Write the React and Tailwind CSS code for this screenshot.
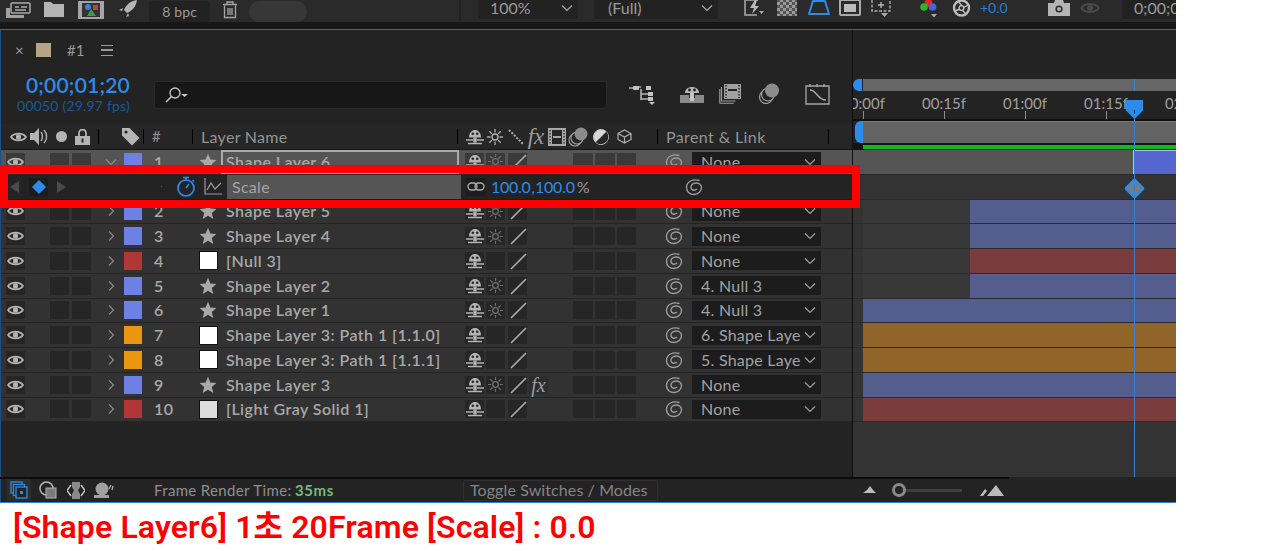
import React from "react";

const ui = { fontFamily: 'Lato, "Noto Sans", sans-serif' };

const Eye = ({ c = "#b4b4b4", s = 17 }) => (
  <svg width={s} height={s * 0.7} viewBox="0 0 17 12"><path d="M1 6 C4 1.5 13 1.5 16 6 C13 10.5 4 10.5 1 6Z" fill="none" stroke={c} strokeWidth="1.8" /><circle cx="8.5" cy="6" r="2.6" fill={c} /></svg>
);
const Star = () => (
  <svg width="18" height="18" viewBox="0 0 18 18"><path d="M9 .8 11.4 6.6 17.4 7 12.8 11 14.3 17 9 13.7 3.7 17 5.2 11 .6 7 6.6 6.6Z" fill="#a8a8a8" /></svg>
);
const Shy = ({ c = "#b4b4b4" }) => (
  <svg width="18" height="16" viewBox="0 0 18 16"><path d="M3 8.5 C3 -1.500 15 -1.500 15 8.500Z" fill={c} /><circle cx="6.800" cy="4.800" r="1.300" fill="#2a2a2a" /><circle cx="11.200" cy="4.800" r="1.300" fill="#2a2a2a" /><rect x="7.300" y="8.500" width="3.400" height="5" fill={c} /><path d="M0 11H7M11 11H18M2 14.500H16" stroke={c} strokeWidth="1.300" /></svg>
);
const Sun = ({ c = "#6e6e6e", s = 15 }) => (
  <svg width={s} height={s} viewBox="0 0 16 16"><circle cx="8" cy="8" r="3" fill="none" stroke={c} strokeWidth="1.4" /><path d="M8 0V3.5M8 12.5V16M0 8H3.5M12.5 8H16M2.3 2.3 4.8 4.8M11.2 11.2 13.7 13.7M13.7 2.3 11.2 4.8M4.8 11.2 2.3 13.7" stroke={c} strokeWidth="1.3" /></svg>
);
const Slash = () => (
  <svg width="18" height="18" viewBox="0 0 18 18"><path d="M2 17 17 2" stroke="#aaa" strokeWidth="1.7" /></svg>
);
const Fx = ({ size = "text-[20px]" }) => (
  <span className={`${size} italic font-normal tracking-normal leading-none text-[#9c9c9c]`} style={{ fontFamily: '"Liberation Serif", serif' }}>fx</span>
);
const Spiral = () => (
  <svg width="18" height="18" viewBox="0 0 18 18"><path d="M14.500 2.500 C8 .5 1.500 3.500 1.500 9.500 C1.500 14 5 16.500 9 16.500 C13.500 16.500 16.500 13 16.500 9.500 C16.500 6.500 13.500 5 11 5 C7.500 5 5.500 7.500 6 10 C6.500 12.500 10 13 12 11" fill="none" stroke="#9c9c9c" strokeWidth="1.4" /></svg>
);
const Chev = ({ open, c = "#8a8a8a", w = 14 }) => (
  <svg width={w} height="10" viewBox="0 0 14 10">{open ? <path d="M2 2.5 7 7.5 12 2.5" fill="none" stroke={c} strokeWidth="1.2" /> : <path d="M5 .5 9.5 5 5 9.5" fill="none" stroke={c} strokeWidth="1.2" />}</svg>
);

const rows = [
  { n: 2, c: "#6c80e6", t: "s", name: "Shape Layer 5", sun: 1, p: "None", bar: "#535d8e", at: 107 },
  { n: 3, c: "#6c80e6", t: "s", name: "Shape Layer 4", sun: 1, p: "None", bar: "#535d8e", at: 107 },
  { n: 4, c: "#b33636", t: "w", name: "[Null 3]", p: "None", bar: "#7a3c3c", at: 107 },
  { n: 5, c: "#6c80e6", t: "s", name: "Shape Layer 2", sun: 1, p: "4. Null 3", bar: "#535d8e", at: 107 },
  { n: 6, c: "#6c80e6", t: "s", name: "Shape Layer 1", sun: 1, p: "4. Null 3", bar: "#535d8e", at: 0 },
  { n: 7, c: "#ea960e", t: "w", name: "Shape Layer 3: Path 1 [1.1.0]", p: "6. Shape Laye", bar: "#916529", at: 0 },
  { n: 8, c: "#ea960e", t: "w", name: "Shape Layer 3: Path 1 [1.1.1]", p: "5. Shape Laye", bar: "#916529", at: 0 },
  { n: 9, c: "#6c80e6", t: "s", name: "Shape Layer 3", sun: 1, fx: 1, p: "None", bar: "#535d8e", at: 0 },
  { n: 10, c: "#b33636", t: "g", name: "[Light Gray Solid 1]", p: "None", bar: "#7a3c3c", at: 0 },
];

const Box = ({ w = "w-[19px]", cls = "", dark = "bg-[#242424]", children }) => (
  <div className={`${w} h-[18px] shrink-0 flex items-center justify-center ${dark} ${cls}`}>{children}</div>
);

function Row({ r, sel }) {
  const dark = sel ? "bg-[#3a3a3a]" : "bg-[#262626]";
  return (
    <div className={`flex items-center h-[24.75px] shrink-0 pl-[5px] border-b border-[#242424] text-[16px] tracking-[0.45px] font-semibold text-[#a8a8a8] ${sel ? "bg-[#555555]" : "bg-[#323232]"}`}>
      <Box dark={dark}><Eye /></Box>
      <Box cls="ml-[25px]" dark={dark} />
      <Box cls="ml-[3px]" dark={dark} />
      <div className="w-[33px] shrink-0 flex justify-center pl-[6px]"><Chev open={sel} /></div>
      <div className="w-[18px] h-[18px] shrink-0" style={{ background: r.c }} />
      <div className="w-[57px] shrink-0 pl-[12px]">{r.n}</div>
      <div className="w-[18px] h-[18px] shrink-0 flex items-center justify-center">
        {r.t === "s" ? <Star /> : <div className={`w-[19px] h-[19px] shrink-0 border border-[#111] ${r.t === "w" ? "bg-white" : "bg-[#dddddd]"}`} />}
      </div>
      <div className={`ml-[4px] h-[24px] shrink-0 flex items-center whitespace-nowrap ${sel ? "border-2 border-[#aaaaaa] pl-[3px] w-[238px] mr-[6px]" : "pl-[5px] w-[244px]"}`}>{r.name}</div>
      <Box w="w-[19px]" dark={dark}><Shy /></Box>
      <Box cls="ml-[2px]" dark={dark}>{r.sun ? <Sun /> : null}</Box>
      <Box cls="ml-[3px]" dark={dark}><Slash /></Box>
      <Box cls="ml-[2px]" dark={r.fx ? "bg-[#2c2c2c]" : ""}>{r.fx ? <Fx /> : null}</Box>
      <Box cls="ml-[25px]" w="w-[20px]" dark={dark} />
      <Box cls="ml-[2px]" w="w-[20px]" dark={dark} />
      <Box cls="ml-[2px]" dark={dark} />
      <div className="w-[56px] shrink-0 flex justify-center pl-[20px]"><Spiral /></div>
      <div className="w-[129px] h-[19px] shrink-0 bg-[#1c1c1c] flex items-center pl-[9px] pr-[4px] justify-between whitespace-nowrap text-[#a2a2a2] font-normal text-[16px] tracking-[0.25px]">
        <span>{r.p}</span><Chev open c="#a0a0a0" />
      </div>
    </div>
  );
}

function TlRow({ r }) {
  return (
    <div className="flex h-[24.75px] shrink-0 border-b border-[#2a2a2a] bg-[#383838]">
      <div className="w-[10px] shrink-0 bg-[#343434]" />
      {r.at ? <div className="shrink-0" style={{ width: r.at }} /> : null}
      <div className="flex-1" style={{ background: r.bar }} />
    </div>
  );
}

const Head = ({ w, cls = "", children }) => (
  <div className={`${w} shrink-0 flex items-center justify-center ${cls}`}>{children}</div>
);
const Sep = () => <div className="w-px h-[15px] bg-black shrink-0" />;

export default function App() {
  return (
    <div className="w-[1278px] h-[551px] bg-white overflow-hidden relative" style={ui}>
      <div className="w-[1176px] h-[503px] flex flex-col bg-[#232323]">
        {/* app toolbar */}
        <div className="h-[22px] shrink-0 bg-[#2a2a2a] flex items-center overflow-hidden text-[#9a9a9a] text-[16px]">
          <div className="ml-[5px] w-[26px] flex -mt-[2px]"><svg width="26" height="18" viewBox="0 0 26 18"><rect x="6" y="2" width="19" height="10" rx="1" fill="none" stroke="#aaa" strokeWidth="1.5" /><path d="M10 6h4M16 6h6M10 9h11" stroke="#aaa" strokeWidth="1.5" /><path d="M1 7h4v10H1zM5 14h14v3H5z" fill="#a0a0a0" /></svg></div>
          <div className="ml-[13px] w-[20px] flex -mt-[4px]"><svg width="20" height="16" viewBox="0 0 20 16"><path d="M0 1h7l2 2h11v13H0z" fill="#b4b4b4" /></svg></div>
          <div className="ml-[14px] w-[26px] flex -mt-[2px]"><svg width="26" height="18" viewBox="0 0 26 18"><rect width="26" height="18" fill="#a5a5a5" /><rect x="4" y="2" width="18" height="14" fill="#333" /><circle cx="10" cy="6" r="3" fill="#3f7fd6" /><path d="M13 8 18 15H9Z" fill="#3b9d4c" /><rect x="15" y="4" width="5" height="5" fill="#c93c3c" /></svg></div>
          <div className="ml-[14px] w-[20px] flex -mt-[4px]"><svg width="20" height="19" viewBox="0 0 20 19"><path d="M19 0C12 1 8 5 6 10l3 3c5-2 9-6 10-13ZM1 10l4-2-1 3ZM8 17l2-4 1 3Z" fill="#b4b4b4" /></svg></div>
          <div className="ml-[11px] w-[66px] h-[21px] rounded-[3px] bg-[#222222] flex items-center justify-center text-[14px] tracking-[0.2px]">8 bpc</div>
          <div className="ml-[12px] w-[16px] flex -mt-[3px]"><svg width="16" height="18" viewBox="0 0 16 18"><path d="M1 3.5h14M5 3V1h6v2" fill="none" stroke="#a5a5a5" strokeWidth="1.4" /><path d="M2.5 4.5v12h11v-12M6 7v7M8 7v7M10 7v7" fill="none" stroke="#a5a5a5" strokeWidth="1.3" /></svg></div>
          <div className="ml-[11px] w-[62px] h-[21px] rounded-full bg-[#373737]" />
          <div className="ml-[152px] w-[2px] h-[22px] bg-[#222222]" />
          <div className="flex items-center -mt-[7px]">
            <div className="ml-[17px] w-[100px] h-[22px] rounded-b-[3px] bg-[#222222] flex items-center justify-between pl-[12px] pr-[4px] text-[16px]"><span>100%</span><Chev open c="#aaa" /></div>
            <div className="ml-[16px] w-[124px] h-[22px] rounded-b-[3px] bg-[#222222] flex items-center justify-between pl-[14px] pr-[4px] text-[16px]"><span>(Full)</span><Chev open c="#aaa" /></div>
            <div className="ml-[25px] w-[22px] flex"><svg width="22" height="17" viewBox="0 0 22 17"><path d="M15 1H2v15h12" fill="none" stroke="#aaa" strokeWidth="1.5" /><path d="M12 1 7 9h4l-2 6 7-8h-4l2-6Z" fill="#bbb" /><path d="M16 12h5l-2.5 3Z" fill="#aaa" /></svg></div>
            <div className="ml-[12px] w-[20px] h-[17px] bg-[repeating-conic-gradient(#999_0_25%,#555_0_50%)] bg-[length:6px_6px]" />
            <div className="ml-[10px] w-[24px] flex"><svg width="24" height="17" viewBox="0 0 24 17"><path d="M6 2h12l4 13H2Z" fill="none" stroke="#2d8ceb" strokeWidth="2" strokeLinejoin="round" /></svg></div>
            <div className="ml-[8px] w-[22px] h-[17px] border-2 border-[#aaa] rounded-[2px] flex items-center justify-center"><div className="w-[12px] h-[8px] bg-[#bbb]" /></div>
            <div className="ml-[8px] w-[23px] flex"><svg width="23" height="20" viewBox="0 0 23 20"><path d="M3 2v11h18V2" fill="none" stroke="#aaa" strokeWidth="1.4" strokeDasharray="3 1.5" /><path d="M12 4v6M9 7h6" stroke="#bbb" strokeWidth="1.3" /><path d="M12 15h7l-3.5 4Z" fill="#aaa" /></svg></div>
            <div className="ml-[28px] w-[17px] flex mt-[4px]"><svg width="17" height="20" viewBox="0 0 17 20"><circle cx="8.5" cy="3" r="3.8" fill="#e22" /><circle cx="4" cy="7" r="3.8" fill="#2b2" /><circle cx="12.5" cy="7" r="3.8" fill="#46d" /><path d="M11 14h6l-3 3.5Z" fill="#aaa" /></svg></div>
            <div className="ml-[15px] w-[19px] flex"><svg width="19" height="18" viewBox="0 0 19 18"><circle cx="9.5" cy="9" r="7.5" fill="none" stroke="#bbb" strokeWidth="2.4" /><circle cx="9.5" cy="9" r="2.4" fill="none" stroke="#bbb" strokeWidth="1.4" /><path d="M6 2 10 7M16 6 11 9M14 15 10 11M3 12 8 10" stroke="#bbb" strokeWidth="1.4" /></svg></div>
            <div className="ml-[9px] w-[36px] text-[14px] text-[#2a7fd4]">+0.0</div>
            <div className="ml-[32px] w-[22px] flex"><svg width="22" height="16" viewBox="0 0 22 16"><path d="M0 3h6l1-3h8l1 3h6v13H0Z" fill="#b4b4b4" /><circle cx="11" cy="9" r="3.6" fill="#2a2a2a" /><circle cx="11" cy="9" r="2" fill="#b4b4b4" /></svg></div>
            <div className="ml-[10px] w-[20px] flex"><Eye c="#4a4a4a" s={20} /></div>
            <div className="ml-[22px] w-[54px] h-[22px] rounded-bl-[3px] bg-[#222222] flex items-center pl-[12px] text-[16px] whitespace-nowrap overflow-hidden">0;00;0</div>
          </div>
        </div>
        <div className="h-[7px] shrink-0 bg-[#181818]" />
        <div className="h-px shrink-0 bg-[#2b6cb0]" />

        {/* body */}
        <div className="h-[447px] shrink-0 flex">
          {/* left panel */}
          <div className="w-[852px] shrink-0 flex flex-col border-l border-[#1d4f86] bg-[#232323]">
            <div className="h-[40px] shrink-0 flex items-center text-[#9a9a9a]">
              <span className="ml-[14px] w-[8px] text-[15px] leading-none">×</span>
              <div className="ml-[13px] w-[15px] h-[14px] bg-[#b5a583]" />
              <span className="ml-[16px] text-[15px]">#1</span>
              <div className="ml-[17px] w-[12px] h-[11px] border-y-[1.5px] border-[#9a9a9a] flex items-center"><div className="w-full h-[1.5px] bg-[#9a9a9a]" /></div>
            </div>
            <div className="h-[54px] shrink-0 flex items-start">
              <div className="w-[129px] shrink-0 flex flex-col items-end pt-[2px]">
                <div className="text-[21px] leading-[26px] font-semibold text-[#2d8ceb] whitespace-nowrap tracking-[0.2px]">0;00;01;20</div>
                <div className="text-[14px] leading-[16px] text-[#1b5797] whitespace-nowrap tracking-[0.2px]">00050 (29.97 fps)</div>
              </div>
              <div className="ml-[24px] mt-[11px] w-[453px] h-[28px] shrink-0 rounded-[3px] bg-[#171717] border border-[#2a2a2a] flex items-center pl-[9px]">
                <svg width="26" height="18" viewBox="0 0 26 18"><circle cx="11" cy="7" r="5" fill="none" stroke="#c8c8c8" strokeWidth="1.3" /><path d="M7.5 10.5 2 16" stroke="#c8c8c8" strokeWidth="1.6" /><path d="M17 8h7l-3.5 3Z" fill="#c8c8c8" /></svg>
              </div>
              <div className="ml-[22px] mt-[14px] w-[27px] flex"><svg width="27" height="22" viewBox="0 0 27 22"><path d="M0 4h6M6 3h6M12 5v11M12 10h8M12 15h8" stroke="#b4b4b4" strokeWidth="1.6" /><rect x="4" y="2" width="6" height="4" rx="1" fill="#c4c4c4" /><rect x="17" y="2" width="5" height="4" fill="#c4c4c4" /><rect x="19" y="8" width="5" height="4" fill="#c4c4c4" /><rect x="19" y="13" width="5" height="4" fill="#c4c4c4" /><path d="M20 18h6l-3 3Z" fill="#c4c4c4" /></svg></div>
              <div className="ml-[24px] mt-[14px] w-[24px] flex"><svg width="24" height="20" viewBox="0 0 24 20"><path d="M5 9C5 1 19 1 19 9Z" fill="#b8b8b8" /><circle cx="9.5" cy="6" r="1.4" fill="#232323" /><circle cx="14.5" cy="6" r="1.4" fill="#232323" /><path d="M0 11h9v3h6v-3h9v8H0Z" fill="#8a8a8a" /><rect x="10" y="9" width="4" height="8" fill="#c8c8c8" /></svg></div>
              <div className="ml-[15px] mt-[13px] w-[22px] flex"><svg width="22" height="21" viewBox="0 0 22 21"><rect x="5" y="1" width="17" height="15" fill="#a0a0a0" /><path d="M7 2v13M20 2v13" stroke="#232323" strokeWidth="1.5" strokeDasharray="1.5 1.5" /><rect x="9" y="6" width="9" height="2" fill="#232323" /><path d="M2.5 4v14h14M.8 6v14.2h14" fill="none" stroke="#a0a0a0" strokeWidth="1.1" /></svg></div>
              <div className="ml-[17px] mt-[13px] w-[22px] flex"><svg width="22" height="21" viewBox="0 0 22 21"><circle cx="8" cy="14" r="6.5" fill="none" stroke="#a0a0a0" strokeWidth="1.2" /><circle cx="10" cy="11.5" r="6.5" fill="#232323" stroke="#a0a0a0" strokeWidth="1.2" /><circle cx="14" cy="7.5" r="7" fill="#8c8c8c" /></svg></div>
              <div className="ml-[25px] mt-[13px] w-[25px] flex"><svg width="25" height="22" viewBox="0 0 25 22"><path d="M1 3h23v18H1ZM5 1v3M12 1v3M19 1v3" fill="none" stroke="#a8a8a8" strokeWidth="1.3" /><path d="M5 7C12 7 12 17 21 17" fill="none" stroke="#a8a8a8" strokeWidth="1.4" /></svg></div>
            </div>
            {/* header */}
            <div className="h-[25px] shrink-0 flex items-center bg-[#262626] text-[#949494] text-[16px] whitespace-nowrap">
              <Head w="w-[22px] ml-[6px]"><Eye /></Head>
              <Head w="w-[20px]"><svg width="18" height="17" viewBox="0 0 18 17"><path d="M0 5h4l5-5v17l-5-5H0Z" fill="#b4b4b4" /><path d="M11 4c2 2.5 2 6.5 0 9M14 2c3.5 3.5 3.5 9.5 0 13" fill="none" stroke="#b4b4b4" strokeWidth="1.4" /></svg></Head>
              <Head w="w-[24px]"><div className="w-[11px] h-[11px] rounded-full bg-[#b4b4b4]" /></Head>
              <Head w="w-[19px]"><svg width="15" height="16" viewBox="0 0 15 16"><path d="M4 7V4a3.5 3.5 0 0 1 7 0v3" fill="none" stroke="#b4b4b4" strokeWidth="1.8" /><rect y="7" width="15" height="9" fill="#b4b4b4" /><rect x="6.5" y="9.5" width="2" height="4" fill="#262626" /></svg></Head>
              <div className="w-[6px]" /><Sep />
              <Head w="w-[37px] ml-[6px]"><svg width="19" height="19" viewBox="0 0 19 19" className="ml-[14px]"><path d="M1 1h7.500L18.500 11 11 18.500 1 8.500Z" fill="#b4b4b4" /><circle cx="5" cy="5" r="1.600" fill="#262626" /></svg></Head>
              <div className="w-[1px]" /><Sep />
              <span className="ml-[8px] w-[40px] text-[15px]">#</span><Sep />
              <span className="ml-[8px] w-[256px] tracking-[0.3px]">Layer Name</span><Sep />
              <Head w="w-[19px] ml-[7px]"><Shy /></Head>
              <Head w="w-[22px]"><Sun c="#b0b0b0" s={16} /></Head>
              <Head w="w-[19px]"><svg width="16" height="16" viewBox="0 0 16 16"><path d="M1 1 15 15" stroke="#b0b0b0" strokeWidth="2" strokeDasharray="2 1.500" /></svg></Head>
              <Head w="w-[22px]"><Fx size="text-[23px]" /></Head>
              <Head w="w-[20px]"><svg width="18" height="18" viewBox="0 0 18 18"><rect width="18" height="18" fill="#a8a8a8" /><path d="M2 2v14M16 2v14" stroke="#262626" strokeWidth="1.300" strokeDasharray="1.500 1.500" /><rect x="4" y="2" width="10" height="14" fill="#262626" /><rect x="5" y="8" width="8" height="2" fill="#a8a8a8" /></svg></Head>
              <Head w="w-[22px]"><svg width="20" height="20" viewBox="0 0 20 20"><circle cx="7" cy="13" r="6" fill="none" stroke="#a0a0a0" strokeWidth="1.100" /><circle cx="9" cy="11" r="6" fill="#262626" stroke="#a0a0a0" strokeWidth="1.100" /><circle cx="13" cy="7" r="6.500" fill="#8c8c8c" /></svg></Head>
              <Head w="w-[24px]"><svg width="16" height="16" viewBox="0 0 16 16"><circle cx="8" cy="8" r="7.500" fill="#d8d8d8" stroke="#c4c4c4" /><path d="M13.300 2.700A7.500 7.500 0 0 1 2.700 13.300Z" fill="#262626" /></svg></Head>
              <Head w="w-[23px]"><svg width="15" height="15" viewBox="0 0 15 15"><path d="M7.500 1 14 4.500v6L7.500 14 1 10.500v-6ZM1 4.500 7.500 8 14 4.500M7.500 8v6" fill="none" stroke="#b0b0b0" strokeWidth="1.200" /></svg></Head>
              <div className="w-[21px]" /><Sep />
              <span className="ml-[8px] w-[162px] tracking-[0.4px]">Parent &amp; Link</span><Sep />
            </div>
            <div className="h-px shrink-0 bg-[#161616]" />
            {/* layers */}
            <Row sel r={{ n: 1, c: "#6c80e6", t: "s", name: "Shape Layer 6", sun: 1, p: "None" }} />
            <div className="h-[24.75px] shrink-0 flex items-center bg-[#232323] border-b border-[#1c1c1c] text-[#9a9a9a] text-[16px]">
              <div className="ml-[9px] w-[10px] flex"><svg width="10" height="12" viewBox="0 0 10 12"><path d="M9 0v12L0 6Z" fill="#4a4a4a" /></svg></div>
              <div className="ml-[9px] w-[19px] h-[18px] bg-[#1c1c1c] flex items-center justify-center"><div className="w-[10px] h-[10px] rotate-45 bg-[#2d8ceb]" /></div>
              <div className="ml-[8px] w-[10px] flex"><svg width="10" height="12" viewBox="0 0 10 12"><path d="M1 0v12l9-6Z" fill="#4a4a4a" /></svg></div>
              <div className="ml-[95px] w-[1px] h-[1px] bg-[#555]" />
              <div className="ml-[14px] w-[20px] flex"><svg width="20" height="21" viewBox="0 0 20 21"><circle cx="10" cy="12" r="8" fill="none" stroke="#2d8ceb" strokeWidth="1.700" /><path d="M7 1.500h6M10 2v3M10 12l3-4M16.500 4l1.500 1.500" stroke="#2d8ceb" strokeWidth="1.600" fill="none" /></svg></div>
              <div className="ml-[8px] w-[18px] flex"><svg width="18" height="17" viewBox="0 0 18 17"><path d="M1 0v16h17" fill="none" stroke="#999" strokeWidth="1.200" /><path d="M3 12 7 5 11 11 17 5" fill="none" stroke="#999" strokeWidth="1.300" /></svg></div>
              <div className="ml-[5px] w-[234px] h-[24px] bg-[#555555] pl-[5px] flex items-center text-[#a4a4a4] tracking-[0.3px]">Scale</div>
              <Box cls="ml-[5px]" dark="bg-[#1c1c1c]"><svg width="18" height="9" viewBox="0 0 18 9"><rect x="1" y="1" width="9" height="7" rx="3.500" fill="none" stroke="#aaa" strokeWidth="1.400" /><rect x="8" y="1" width="9" height="7" rx="3.500" fill="none" stroke="#aaa" strokeWidth="1.400" /></svg></Box>
              <span className="ml-[6px] text-[#2d8ceb] text-[16px] tracking-[-0.25px] whitespace-nowrap">100.0<span className="mx-[0.5px]">,</span>100.0</span>
              <span className="ml-[2px] text-[16px] text-[#999]">%</span>
              <div className="ml-[95px] flex"><Spiral /></div>
            </div>
            {rows.map((r) => <Row key={r.n} r={r} />)}
          </div>
          <div className="w-px shrink-0 bg-[#0e0e0e]" />
          {/* timeline */}
          <div className="flex-1 min-w-0 relative flex flex-col overflow-hidden bg-[#232323]">
            <div className="h-[49px] shrink-0" />
            <div className="h-[12px] shrink-0 flex">
              <div className="w-[9px] rounded-l-full bg-[#2d8ceb] mr-[1px]" />
              <div className="flex-1 bg-[#666666]" />
            </div>
            <div className="h-[30px] shrink-0 relative text-[#a0a0a0] text-[15px] border-b-2 border-[#0f0f0f] overflow-hidden">
              <div className="flex items-center h-[24px] whitespace-nowrap pt-[1px]">
                <span className="-ml-[12px] w-[44px] shrink-0 text-center">00:00f</span>
                <span className="ml-[37px] w-[44px] shrink-0 text-center">00:15f</span>
                <span className="ml-[37px] w-[44px] shrink-0 text-center">01:00f</span>
                <span className="ml-[37px] w-[44px] shrink-0 text-center">01:15f</span>
                <span className="ml-[37px] w-[44px] shrink-0 text-center">02:00f</span>
              </div>
              <div className="flex absolute left-[10px] bottom-0">
                <div className="w-px h-[8px] bg-[#8a8a8a]" /><div className="ml-[80px] w-px h-[8px] bg-[#8a8a8a]" /><div className="ml-[80px] w-px h-[8px] bg-[#8a8a8a]" /><div className="ml-[80px] w-px h-[8px] bg-[#8a8a8a]" />
              </div>
            </div>
            <div className="h-[22px] shrink-0 flex">
              <div className="ml-[2px] w-[8px] rounded-l-[6px] bg-[#2d8ceb]" />
              <div className="flex-1 bg-[#636363] border-t border-[#777]" />
            </div>
            <div className="h-[7px] shrink-0 bg-[#151515] pl-[10px] pt-[2px]"><div className="h-[4px] bg-[#12b81c]" /></div>
            <div className="h-[24.75px] shrink-0 flex border-b border-[#2a2a2a] bg-[#555555]">
              <div className="w-[280px] shrink-0" />
              <div className="flex-1 bg-[#5467cf] border-l-2 border-t border-[#b7c0ea]" />
            </div>
            <div className="h-[24.75px] shrink-0 border-b border-[#2a2a2a] bg-[#333333]" />
            {rows.map((r) => <TlRow key={r.n} r={r} />)}
            <div className="flex-1 bg-[#333333]" />
            {/* current-time indicator */}
            <div className="absolute left-[281px] top-[70px] bottom-0 w-px bg-[#2d82dc]" />
            <div className="absolute left-[273px] top-[70px] w-[17px] h-[19px] bg-[#2d8ceb] [clip-path:polygon(0_0,100%_0,100%_55%,50%_100%,0_55%)]" />
            <div className="absolute left-[281px] top-[80px] w-px h-[4px] bg-[#14304f]" />
            <div className="absolute left-[281px] top-[49px] w-px h-[12px] bg-[#2d82dc]" />
            <div className="absolute left-[274px] top-[150.5px] w-[15px] h-[15px] rotate-45 bg-[#7b7b7b] border-2 border-[#2d8ceb] rounded-[2px]" />
            <div className="absolute left-[281px] top-[146px] w-px h-[24px] bg-[#2d82dc]" />
          </div>
        </div>

        {/* footer */}
        <div className="h-[2px] w-[1009px] shrink-0 bg-[#0c0c0c]" />
        <div className="flex-1 flex items-center border-l border-[#1d4f86] text-[15px] text-[#8f8f8f] whitespace-nowrap">
          <div className="ml-[6px] w-[24px] h-[22px] bg-[#2c2c2c] flex items-center justify-center"><svg width="18" height="18" viewBox="0 0 18 18"><rect x="1" y="1" width="11" height="11" fill="none" stroke="#2d8ceb" strokeWidth="1.300" /><rect x="3.500" y="3.500" width="11" height="11" fill="#232323" stroke="#2d8ceb" strokeWidth="1.300" /><rect x="6" y="6" width="11" height="11" fill="#232323" stroke="#2d8ceb" strokeWidth="1.300" /><rect x="10" y="10" width="3" height="3" fill="#2d8ceb" /></svg></div>
          <div className="ml-[8px] w-[19px] flex"><svg width="19" height="18" viewBox="0 0 19 18"><circle cx="7.500" cy="7.500" r="6.500" fill="none" stroke="#b4b4b4" strokeWidth="1.500" /><rect x="7" y="7" width="10" height="10" fill="#7a7a7a" stroke="#b4b4b4" /></svg></div>
          <div className="ml-[9px] w-[18px] flex"><svg width="18" height="19" viewBox="0 0 18 19"><path d="M5 1h8v5l-2 3.500 2 3.500v5H5v-5l2-3.500L5 6Z" fill="#8a8a8a" /><path d="M4 4 0 9.500 4 15M14 4l4 5.500L14 15" fill="none" stroke="#c0c0c0" strokeWidth="1.500" /></svg></div>
          <div className="ml-[9px] w-[20px] flex"><svg width="20" height="17" viewBox="0 0 20 17"><circle cx="8" cy="7" r="6.500" fill="#a0a0a0" /><path d="M0 13h15v3H0Z" fill="#a0a0a0" /><path d="M15 7l2-4M18 8l1-4" stroke="#b0b0b0" strokeWidth="1.300" /></svg></div>
          <span className="ml-[40px] w-[141px] tracking-[0.35px]">Frame Render Time:</span>
          <span className="font-bold text-[#78b97c] w-[40px] tracking-[0.6px]">35ms</span>
          <div className="ml-[128px] w-[195px] h-[21px] border border-[#2f2f2f] rounded-[2px] flex items-center pl-[6px] text-[16px] tracking-[0.1px] text-[#838383]">Toggle Switches / Modes</div>
          <div className="ml-[205px] w-[13px] flex"><svg width="13" height="8" viewBox="0 0 13 8"><path d="M0 7 4 4 7 0 10 4 13 7Z" fill="#bbb" /></svg></div>
          <div className="ml-[16px] w-[14px] h-[14px] rounded-full border-[3px] border-[#8a8a8a] shrink-0" />
          <div className="w-[56px] h-[3px] bg-[#3f3f3f]" />
          <div className="ml-[18px] w-[24px] flex"><svg width="24" height="11" viewBox="0 0 24 11"><path d="M7 11 16 0 24 11ZM0 11 5 4 7 6 3 11Z" fill="#bbb" /></svg></div>
        </div>
        <div className="h-[1.500px] shrink-0 bg-[#2d7fd8]" />
      </div>
      <div className="pl-[13px] pt-[4px] text-[32px] leading-[40px] font-semibold tracking-[0.13px] text-[#ff0000] whitespace-nowrap" style={{ fontFamily: 'Roboto, "Noto Sans CJK KR", sans-serif' }}>
        [Shape Layer6] 1초 20Frame [Scale] : 0.0
      </div>
      {/* red annotation frame over the layer stack */}
      <div className="absolute left-0 top-[165px] w-[860px] h-[43px] border-[8px] border-[#ff0000] pointer-events-none" />
    </div>
  );
}
